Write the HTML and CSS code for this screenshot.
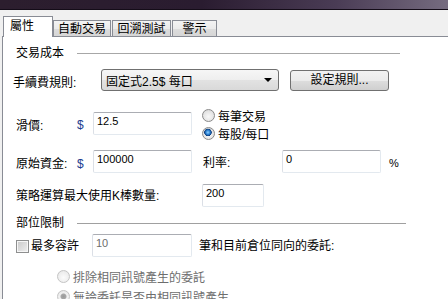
FILE: index.html
```html
<!DOCTYPE html>
<html>
<head>
<meta charset="utf-8">
<link rel="stylesheet" href="styles.css">
</head>
<body>
<div class="win">
  <div class="titlebar"></div>
  <div class="tabstrip">
    <div class="tab sel">屬性</div>
    <div class="tab t2">自動交易</div>
    <div class="tab t3">回溯測試</div>
    <div class="tab t4">警示</div>
  </div>
  <div class="panel">
    <div class="section s1"><span class="sec-text">交易成本</span><span class="sec-line l1"></span></div>

    <div class="row fee">
      <span class="lbl fee-lbl">手續費規則:</span>
      <div class="combo"><span class="combo-text">固定式2.5$ 每口</span><span class="arrow"></span></div>
      <div class="btn">設定規則...</div>
    </div>

    <div class="row slip">
      <span class="lbl w61 lbl-low">滑價:</span>
      <span class="dollar lbl-low">$</span>
      <div class="input w99 mt2">12.5</div>
      <div class="radios">
        <div class="radio-row"><span class="radio"></span><span>每筆交易</span></div>
        <div class="radio-row r2"><span class="radio on"></span><span>每股/每口</span></div>
      </div>
    </div>

    <div class="row cap">
      <span class="lbl w61">原始資金:</span>
      <span class="dollar">$</span>
      <div class="input w99">100000</div>
      <span class="lbl rate-lbl">利率:</span>
      <div class="input w99">0</div>
      <span class="pct">%</span>
    </div>

    <div class="row kbar">
      <span class="lbl k-lbl">策略運算最大使用K棒數量:</span>
      <div class="input w62">200</div>
    </div>

    <div class="section s2"><span class="sec-text">部位限制</span><span class="sec-line l2"></span></div>

    <div class="row maxrow">
      <span class="check"></span>
      <span class="lbl max-lbl">最多容許</span>
      <div class="input w100 disabled">10</div>
      <span class="lbl after">筆和目前倉位同向的委託:</span>
    </div>

    <div class="radio-row dis first"><span class="radio off"></span><span>排除相同訊號產生的委託</span></div>
    <div class="radio-row dis second"><span class="radio off on"></span><span>無論委託是否由相同訊號產生</span></div>
  </div>
</div>
</body>
</html>
```

FILE: styles.css
```css
html, body {
  margin: 0;
  padding: 0;
}
body {
  width: 448px;
  height: 299px;
  overflow: hidden;
  background: #f0f0f0;
  font-family: "Liberation Sans", "Noto Sans CJK TC", sans-serif;
  font-size: 12px;
  color: #000;
}
.win {
  width: 448px;
  height: 299px;
  display: flex;
  flex-direction: column;
}
.titlebar {
  height: 9px;
  flex: none;
  background: linear-gradient(90deg, #2c1e2e 0%, #2a1c30 45%, #4a3c55 75%, #766c80 100%);
  border-bottom: 1px solid #140c18;
}
.tabstrip {
  height: 26px;
  flex: none;
  display: flex;
  align-items: flex-end;
  padding-left: 3px;
  box-sizing: border-box;
}
.tab {
  box-sizing: border-box;
  height: 16px;
  border: 1px solid #898c95;
  border-bottom: none;
  background: linear-gradient(#f3f3f3 0%, #ebebeb 50%, #dddddd 51%, #d6d6d6 100%);
  line-height: 17px;
  text-align: center;
  white-space: nowrap;
  font-size: 12px;
}
.tab.sel {
  position: relative;
  z-index: 2;
  width: 50px;
  height: 21px;
  margin-bottom: -1px;
  background: #fff;
  text-align: left;
  padding-left: 6px;
  line-height: 18px;
}
.tab.t2 { width: 58px; }
.tab.t3 { width: 59px; margin-left: 1px; }
.tab.t4 { width: 45px; margin-left: 1px; }

.panel {
  flex: 1;
  margin-left: 2px;
  background: #fff;
  border: 1px solid #898c95;
  border-right: none;
  border-bottom: none;
  padding-left: 13px;
  display: flex;
  flex-direction: column;
}
.section {
  display: flex;
  align-items: center;
  height: 16px;
}
.s1 { margin-top: 8px; }
.s2 { margin-top: 8px; }
.sec-text {
  width: 61px;
  line-height: 16px;
}
.sec-line {
  height: 1px;
  background: #a7a7a7;
}
.l1 { width: 323px; }
.l2 { width: 329px; background: #a0a0a0; }

.row {
  display: flex;
  align-items: center;
}
.lbl {
  white-space: nowrap;
  line-height: 16px;
}
.w61 { width: 61px; }
.dollar {
  width: 16px;
  color: #1d3d8f;
  font-size: 12px;
}
.lbl-low { padding-top: 8px; }

.input {
  box-sizing: border-box;
  height: 23px;
  border: 1px solid #e3e9ef;
  border-top-color: #abadb3;
  border-left-color: #dbdfe6;
  border-radius: 2px;
  background: #fff;
  font-size: 11px;
  line-height: 17px;
  padding-left: 3px;
  white-space: nowrap;
}
.w99 { width: 99px; }
.w100 { width: 100px; }
.w62 { width: 62px; }
.mt2 { margin-top: 2px; }
.disabled { color: #6d6d6d; }

.fee {
  margin-top: 8px;
  margin-left: -3px;
  height: 22px;
}
.fee-lbl {
  width: 88px;
  padding-top: 5px;
}
.combo {
  box-sizing: border-box;
  width: 178px;
  height: 22px;
  border: 1px solid #707070;
  border-radius: 3px;
  background: linear-gradient(#f6f6f6 0%, #eeeeee 50%, #e2e2e2 51%, #d9d9d9 100%);
  display: flex;
  align-items: center;
  padding-left: 4px;
  padding-right: 4px;
}
.combo-text {
  flex: 1;
  white-space: nowrap;
}
.arrow {
  width: 0;
  height: 0;
  border-left: 4px solid transparent;
  border-right: 4px solid transparent;
  border-top: 4px solid #000;
  margin-right: 2px;
}
.btn {
  box-sizing: border-box;
  width: 99px;
  height: 21px;
  margin-left: 11px;
  margin-top: 1px;
  border: 1px solid #707070;
  border-radius: 3px;
  background: linear-gradient(#f2f2f2 0%, #ebebeb 50%, #dddddd 51%, #cfcfcf 100%);
  text-align: center;
  line-height: 19px;
}

.slip {
  margin-top: 19px;
  align-items: flex-start;
  height: 26px;
}
.radios {
  margin-left: 10px;
  display: flex;
  flex-direction: column;
}
.radio-row {
  display: flex;
  align-items: center;
  height: 16px;
  white-space: nowrap;
}
.radios .radio-row:first-child { margin-top: -3px; }
.radios .r2 { margin-top: 2px; }
.radio {
  box-sizing: border-box;
  width: 13px;
  height: 13px;
  border-radius: 50%;
  border: 1px solid #8a8a8a;
  background: radial-gradient(circle at 50% 60%, #f8f8f8 0%, #e6e6e6 55%, #cfcfcf 100%);
  margin-right: 3px;
  flex: none;
}
.radio.on {
  background:
    radial-gradient(circle at 45% 40%, #8fd0ff 0px, #2f86d6 2px, #0c3d7e 3.5px, transparent 4px),
    radial-gradient(circle at 50% 60%, #f8f8f8 0%, #e6e6e6 55%, #cfcfcf 100%);
}
.radio.off {
  border-color: #c4c4c4;
  background: radial-gradient(circle at 50% 60%, #fbfbfb 0%, #eeeeee 60%, #e2e2e2 100%);
}
.radio.off.on {
  background:
    radial-gradient(circle, #9a9a9a 0px, #a8a8a8 2.5px, transparent 3.5px),
    radial-gradient(circle at 50% 60%, #fbfbfb 0%, #eeeeee 60%, #e2e2e2 100%);
}
.dis { color: #6d6d6d; }

.cap {
  margin-top: 14px;
  height: 23px;
}
.cap .lbl.w61, .cap .dollar { padding-top: 4px; }
.rate-lbl {
  width: 79px;
  margin-left: 11px;
  padding-top: 2px;
}
.pct {
  margin-left: 8px;
  font-size: 11px;
  padding-top: 3px;
}

.kbar {
  margin-top: 11px;
  height: 23px;
}
.k-lbl {
  width: 186px;
  padding-top: 1px;
}

.maxrow {
  margin-top: 3px;
  height: 22px;
}
.check {
  box-sizing: border-box;
  width: 13px;
  height: 13px;
  border: 1px solid #8e8f8f;
  background: linear-gradient(135deg, #c9c9c9 0%, #e0e0e0 60%, #f0f0f0 100%);
  box-shadow: inset 0 0 0 1px #f6f6f6;
  flex: none;
  margin-top: 2px;
}
.max-lbl {
  width: 61px;
  margin-left: 2px;
  padding-top: 2px;
}
.after {
  margin-left: 7px;
  padding-top: 2px;
}

.first {
  margin-top: 12px;
  margin-left: 41px;
}
.second {
  margin-top: 4px;
  margin-left: 41px;
}
```
